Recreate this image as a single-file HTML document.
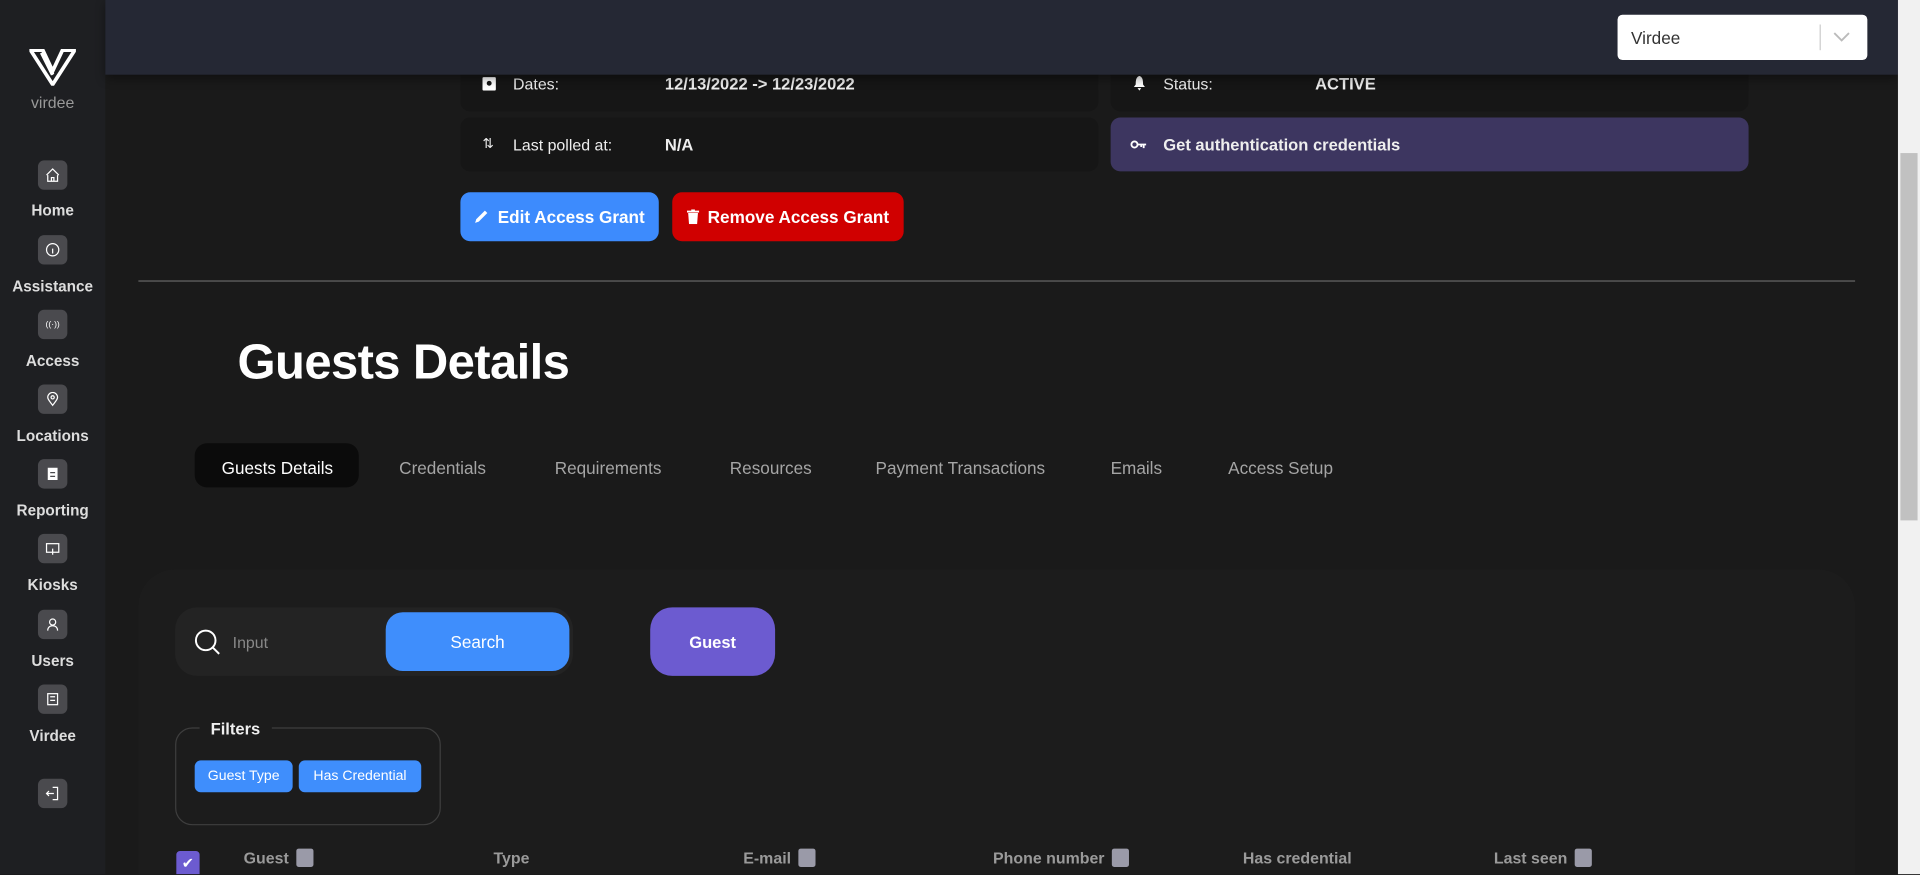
<!DOCTYPE html>
<html><head><meta charset="utf-8"><style>
*{box-sizing:border-box;margin:0;padding:0}
html,body{width:1920px;height:875px;overflow:hidden;background:#1a1a1a;font-family:"Liberation Sans",sans-serif}
#w{position:absolute;left:0;top:0;width:1568px;height:714px;overflow:hidden;transform:scale(1.22449);transform-origin:0 0;background:#1a1a1a}
.a{position:absolute}
.side{left:0;top:0;width:86px;height:715px;background:#1e1f22}
.ni{left:31px;width:24px;height:24px;border-radius:5px;background:#4a4a4e;display:flex;align-items:center;justify-content:center}
.nl{left:0;width:86px;text-align:center;color:#ddd;font-weight:bold;font-size:12.5px}
.card{background:#161616;border-radius:8px;color:#eee;font-size:13px}
.btn{border-radius:8px;color:#fff;font-size:14px;font-weight:bold;display:flex;align-items:center;justify-content:center;gap:7px}
.tab{top:374px;color:#a5a5a5;font-size:14px}
.th{top:693px;color:#9a9a9a;font-weight:bold;font-size:13px;display:flex;align-items:center;gap:6px}
.sq{width:14px;height:15px;background:#9a9aa8;border-radius:2px;display:inline-block}
</style></head><body><div id="w">
<div class="a side"></div>
<svg class="a" style="left:24px;top:40px" width="38" height="30" viewBox="0 0 38 30"><path d="M1 1h10l8 17 8-17h10L19 29z" fill="none" stroke="#fff" stroke-width="3"/><path d="M10 3l9 18" stroke="#fff" stroke-width="3"/></svg>
<div class="a" style="left:0;width:86px;top:76px;text-align:center;color:#999;font-size:13px">virdee</div>
<div class="a ni" style="top:131px"><svg width="12" height="12" viewBox="0 0 12 12" fill="none" stroke="#fff"><path d="M2 6v5h8V6M1 6l5-5 5 5M5 11V8h2v3"/></svg></div><div class="a nl" style="top:165px">Home</div>
<div class="a ni" style="top:192px"><svg width="12" height="12"><circle cx="6" cy="6" r="5" fill="none" stroke="#fff"/><path d="M6 5v4" stroke="#fff"/></svg></div><div class="a nl" style="top:227px">Assistance</div>
<div class="a ni" style="top:253px"><span style="color:#fff;font-size:7px">((·))</span></div><div class="a nl" style="top:288px">Access</div>
<div class="a ni" style="top:314px"><svg width="12" height="12" fill="none" stroke="#fff"><path d="M6 11C3 7 2 6 2 4.5a4 4 0 018 0C10 6 9 7 6 11z"/><circle cx="6" cy="4.5" r="1.3"/></svg></div><div class="a nl" style="top:349px">Locations</div>
<div class="a ni" style="top:375px"><svg width="12" height="12"><rect x="2" y="1" width="8" height="10" fill="#fff"/><path d="M4 5h4M4 8h4" stroke="#4a4a4e"/></svg></div><div class="a nl" style="top:410px">Reporting</div>
<div class="a ni" style="top:436px"><svg width="12" height="12" fill="none" stroke="#fff"><rect x="1" y="2" width="10" height="7"/><path d="M6 6v5"/></svg></div><div class="a nl" style="top:471px">Kiosks</div>
<div class="a ni" style="top:498px"><svg width="12" height="12" fill="none" stroke="#fff"><circle cx="6" cy="4" r="2.5"/><path d="M2 11c0-3 2-4 4-4s4 1 4 4"/></svg></div><div class="a nl" style="top:533px">Users</div>
<div class="a ni" style="top:559px"><svg width="12" height="12" fill="none" stroke="#fff"><rect x="2" y="1.5" width="8" height="9"/><path d="M4 4h4M4 7h4"/></svg></div><div class="a nl" style="top:594px">Virdee</div>
<div class="a ni" style="top:636px"><svg width="12" height="12" fill="none" stroke="#fff"><path d="M6 1h4v10H6M1 6h6M3 4l-2 2 2 2"/></svg></div>

<div class="a card" style="left:376px;top:45px;width:521px;height:46px"><svg class="a" style="left:18px;top:17px" width="11" height="12"><rect x="0" y="1" width="11" height="11" rx="1" fill="#fff"/><circle cx="5.5" cy="6" r="2" fill="#161616"/></svg><span class="a" style="left:43px;top:16px">Dates:</span><b class="a" style="left:167px;top:16px;font-size:13.5px">12/13/2022 -&gt; 12/23/2022</b></div>
<div class="a card" style="left:376px;top:96px;width:521px;height:44px"><span class="a" style="left:18px;top:15px;font-size:11px">⇅</span><span class="a" style="left:43px;top:15px">Last polled at:</span><b class="a" style="left:167px;top:15px;font-size:13.5px">N/A</b></div>
<div class="a card" style="left:907px;top:45px;width:521px;height:46px"><svg class="a" style="left:18px;top:17px" width="11" height="12"><path d="M5.5 0C3 1 2.5 3 2.5 7L1 9h9L8.5 7C8.5 3 8 1 5.5 0zM4 10h3l-1.5 2z" fill="#fff"/></svg><span class="a" style="left:43px;top:16px">Status:</span><b class="a" style="left:167px;top:16px;font-size:13.5px">ACTIVE</b></div>
<div class="a card" style="left:907px;top:96px;width:521px;height:44px;background:#3d3660"><svg class="a" style="left:16px;top:18px" width="14" height="8"><circle cx="3.5" cy="4" r="2.5" fill="none" stroke="#fff" stroke-width="1.5"/><path d="M6 4h7M11 4v3M9 4v2" stroke="#fff" stroke-width="1.5"/></svg><b class="a" style="left:43px;top:15px;font-size:13.5px">Get authentication credentials</b></div>
<div class="a" style="left:86px;top:0;width:1464px;height:61px;background:#252834;box-shadow:0 3px 8px rgba(0,0,0,.4)"></div>
<div class="a" style="left:1321px;top:12px;width:204px;height:37px;background:#fff;border-radius:4px;font-size:14px;color:#333"><span class="a" style="left:11px;top:11px">Virdee</span><span class="a" style="left:165px;top:8px;width:1px;height:21px;background:#ccc"></span><svg class="a" style="left:176px;top:14px" width="14" height="9"><path d="M1 1l6 6 6-6" fill="none" stroke="#bbb" stroke-width="1.5"/></svg></div>
<div class="a" style="left:1550px;top:0;width:18px;height:714px;background:#f1f1f1"><div class="a" style="left:2px;top:125px;width:14px;height:300px;background:#c1c1c1"></div></div>

<div class="a btn" style="left:376px;top:157px;width:162px;height:40px;background:#3d8bfd"><svg width="12" height="12"><path d="M1 11l1-3 7-7 2 2-7 7z" fill="#fff"/></svg>Edit Access Grant</div>
<div class="a btn" style="left:549px;top:157px;width:189px;height:40px;background:#d00000"><svg width="10" height="12"><path d="M0 1h10v1.5H0zM3.5 0h3v1h-3zM1 3h8l-.7 9H1.7z" fill="#fff"/></svg>Remove Access Grant</div>
<div class="a" style="left:113px;top:229px;width:1402px;height:1px;background:#666"></div>
<div class="a" style="left:194px;top:274px;color:#fff;font-size:40px;font-weight:bold;letter-spacing:-.5px">Guests Details</div>
<div class="a" style="left:159px;top:362px;width:134px;height:36px;background:#0b0b0b;border-radius:10px"></div>
<div class="a tab" style="left:181px;color:#fff">Guests Details</div>
<div class="a tab" style="left:326px">Credentials</div>
<div class="a tab" style="left:453px">Requirements</div>
<div class="a tab" style="left:596px">Resources</div>
<div class="a tab" style="left:715px">Payment Transactions</div>
<div class="a tab" style="left:907px">Emails</div>
<div class="a tab" style="left:1003px">Access Setup</div>

<div class="a" style="left:113px;top:465px;width:1402px;height:249px;background:#1c1c1c;border-radius:30px 30px 0 0"></div>
<div class="a" style="left:143px;top:496px;width:325px;height:56px;background:#232323;border-radius:18px"></div>
<svg class="a" style="left:158px;top:513px" width="24" height="24" fill="none" stroke="#fff" stroke-width="1.6"><circle cx="10" cy="10" r="8"/><path d="M16 16l5 5"/></svg>
<div class="a" style="left:190px;top:517px;color:#888;font-size:13px">Input</div>
<div class="a btn" style="left:315px;top:500px;width:150px;height:48px;background:#3f8efc;border-radius:14px;font-weight:normal">Search</div>
<div class="a btn" style="left:531px;top:496px;width:102px;height:56px;background:#6c5bd0;border-radius:18px;font-size:13.5px">Guest</div>
<div class="a" style="left:143px;top:594px;width:217px;height:80px;border:1px solid #3e3e3e;border-radius:14px"></div>
<div class="a" style="left:163px;top:588px;padding:0 9px;background:#1c1c1c;color:#eee;font-weight:bold;font-size:13.5px">Filters</div>
<div class="a btn" style="left:159px;top:621px;width:80px;height:26px;background:#3f8efc;border-radius:5px;font-size:11.5px;font-weight:normal">Guest Type</div>
<div class="a btn" style="left:244px;top:621px;width:100px;height:26px;background:#3f8efc;border-radius:5px;font-size:11.5px;font-weight:normal">Has Credential</div>
<div class="a" style="left:144px;top:695px;width:19px;height:19px;background:#6c5bd0;border-radius:3px 3px 0 0;color:#fff;font-size:12px;text-align:center;line-height:20px">✔</div>
<div class="a th" style="left:199px">Guest <span class="sq"></span></div>
<div class="a th" style="left:403px">Type</div>
<div class="a th" style="left:607px">E-mail <span class="sq"></span></div>
<div class="a th" style="left:811px">Phone number <span class="sq"></span></div>
<div class="a th" style="left:1015px">Has credential</div>
<div class="a th" style="left:1220px">Last seen <span class="sq"></span></div>
</div></body></html>
